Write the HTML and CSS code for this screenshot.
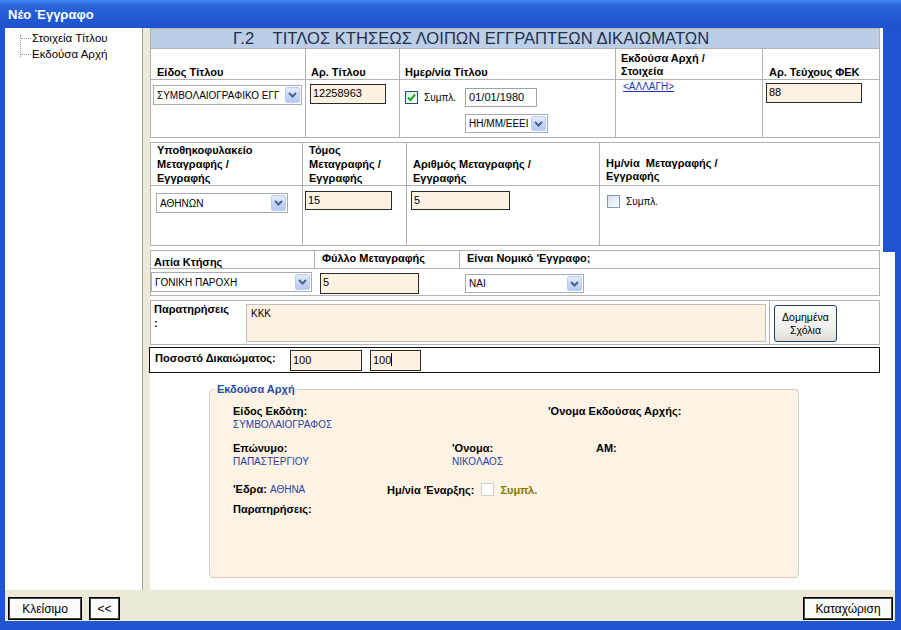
FILE: index.html
```html
<!DOCTYPE html>
<html>
<head>
<meta charset="utf-8">
<title>Νέο Έγγραφο</title>
<link rel="stylesheet" href="styles.css">
</head>
<body>
<div class="window">
  <div class="titlebar">Νέο Έγγραφο</div>
  <div class="client">
    <div class="tree">
      <div class="tree-group">
        <div class="tree-item">Στοιχεία Τίτλου</div>
        <div class="tree-item">Εκδούσα Αρχή</div>
      </div>
    </div>
    <div class="splitter"></div>
    <div class="main">
      <div class="content">

        <div class="sec s1">
          <div class="band">Γ.2&nbsp;&nbsp;&nbsp;&nbsp;ΤΙΤΛΟΣ ΚΤΗΣΕΩΣ ΛΟΙΠΩΝ ΕΓΓΡΑΠΤΕΩΝ ΔΙΚΑΙΩΜΑΤΩΝ</div>
          <div class="hd p6">Είδος Τίτλου</div>
          <div class="hd p4">Αρ. Τίτλου</div>
          <div class="hd p5">Ημερ/νία Τίτλου</div>
          <div class="hd p5 top">Εκδούσα Αρχή /<br>Στοιχεία</div>
          <div class="hd p6">Αρ. Τεύχους ΦΕΚ</div>

          <div class="cell s1c1">
            <div class="sel w149"><span class="sel-text">ΣΥΜΒΟΛΑΙΟΓΡΑΦΙΚΟ ΕΓΓ</span><span class="sel-btn"><svg width="9" height="6" viewBox="0 0 9 6"><path d="M1 1 L4.5 4.5 L8 1" fill="none" stroke="#4d6185" stroke-width="2"/></svg></span></div>
          </div>
          <div class="cell s1c2"><div class="inp w76">12258963</div></div>
          <div class="cell s1c3">
            <div class="chk-line">
              <span class="cb checked"><svg width="11" height="11" viewBox="0 0 11 11"><path d="M2 5.5 L4.5 8 L9 2.5" fill="none" stroke="#21a121" stroke-width="2"/></svg></span>
              <span class="chk-label">Συμπλ.</span>
            </div>
            <div class="date-stack">
              <div class="datebox">01/01/1980</div>
              <div class="sel w83 small"><span class="sel-text">ΗΗ/ΜΜ/ΕΕΕΙ</span><span class="sel-btn"><svg width="9" height="6" viewBox="0 0 9 6"><path d="M1 1 L4.5 4.5 L8 1" fill="none" stroke="#4d6185" stroke-width="2"/></svg></span></div>
            </div>
          </div>
          <div class="cell s1c4"><span class="link">&lt;ΑΛΛΑΓΗ&gt;</span></div>
          <div class="cell s1c5"><div class="inp w96">88</div></div>
        </div>

        <div class="sec s2">
          <div class="hd p6">Υποθηκοφυλακείο<br>Μεταγραφής /<br>Εγγραφής</div>
          <div class="hd p6">Τόμος<br>Μεταγραφής /<br>Εγγραφής</div>
          <div class="hd p6">Αριθμός Μεταγραφής /<br>Εγγραφής</div>
          <div class="hd p6 up">Ημ/νία&nbsp; Μεταγραφής /<br>Εγγραφής</div>

          <div class="cell s2c1">
            <div class="sel w132"><span class="sel-text">ΑΘΗΝΩΝ</span><span class="sel-btn"><svg width="9" height="6" viewBox="0 0 9 6"><path d="M1 1 L4.5 4.5 L8 1" fill="none" stroke="#4d6185" stroke-width="2"/></svg></span></div>
          </div>
          <div class="cell s2c2"><div class="inp w87 h19">15</div></div>
          <div class="cell s2c3"><div class="inp w99 h19">5</div></div>
          <div class="cell s2c4">
            <div class="chk-line">
              <span class="cb"></span>
              <span class="chk-label">Συμπλ.</span>
            </div>
          </div>
        </div>

        <div class="sec s3">
          <div class="hd3 first">Αιτία Κτήσης</div>
          <div class="hd3">Φύλλο Μεταγραφής</div>
          <div class="hd3">Είναι Νομικό 'Εγγραφο;</div>

          <div class="cell s3c1 noline">
            <div class="sel w161"><span class="sel-text">ΓΟΝΙΚΗ ΠΑΡΟΧΗ</span><span class="sel-btn"><svg width="9" height="6" viewBox="0 0 9 6"><path d="M1 1 L4.5 4.5 L8 1" fill="none" stroke="#4d6185" stroke-width="2"/></svg></span></div>
          </div>
          <div class="cell s3c2 noline"><div class="inp w99 h21">5</div></div>
          <div class="cell s3c3">
            <div class="sel w119 small"><span class="sel-text">ΝΑΙ</span><span class="sel-btn"><svg width="9" height="6" viewBox="0 0 9 6"><path d="M1 1 L4.5 4.5 L8 1" fill="none" stroke="#4d6185" stroke-width="2"/></svg></span></div>
          </div>
        </div>

        <div class="s4">
          <div class="s4-label">Παρατηρήσεις<br>:</div>
          <div class="s4-area"><div class="textarea">KKK</div></div>
          <div class="s4-btn"><button class="xpbtn">Δομημένα<br>Σχόλια</button></div>
        </div>

        <div class="s5">
          <span class="s5-label">Ποσοστό Δικαιώματος:</span>
          <div class="inp w72">100</div>
          <div class="inp w50">100<span class="caret"></span></div>
        </div>

        <fieldset class="issuer">
          <legend>Εκδούσα Αρχή</legend>
          <div class="irow r1">
            <div class="icol w315"><div class="lbl">Είδος Εκδότη:</div><div class="val">ΣΥΜΒΟΛΑΙΟΓΡΑΦΟΣ</div></div>
            <div class="icol"><div class="lbl">'Ονομα Εκδούσας Αρχής:</div></div>
          </div>
          <div class="irow r2">
            <div class="icol w219"><div class="lbl">Επώνυμο:</div><div class="val">ΠΑΠΑΣΤΕΡΓΙΟΥ</div></div>
            <div class="icol w144"><div class="lbl">'Ονομα:</div><div class="val">ΝΙΚΟΛΑΟΣ</div></div>
            <div class="icol"><div class="lbl">ΑΜ:</div></div>
          </div>
          <div class="irow r3">
            <div class="icol w154"><span class="lbl">'Εδρα:</span> <span class="val">ΑΘΗΝΑ</span></div>
            <div class="icol inline"><span class="lbl">Ημ/νία 'Εναρξης:</span><span class="cb plain"></span><span class="olive">Συμπλ.</span></div>
          </div>
          <div class="irow r4">
            <div class="icol"><div class="lbl">Παρατηρήσεις:</div></div>
          </div>
        </fieldset>

      </div>
      <div class="rstrip"><div class="rstrip-top"></div></div>
    </div>
  </div>
  <div class="bottombar">
    <button class="btn w74">Κλείσιμο</button>
    <button class="btn w31">&lt;&lt;</button>
    <button class="btn w90 push">Καταχώριση</button>
  </div>
</div>
</body>
</html>
```

FILE: styles.css
```css
html, body {
  margin: 0;
  padding: 0;
}
body {
  width: 901px;
  height: 630px;
  overflow: hidden;
  font-family: "Liberation Sans", Arial, sans-serif;
  background: #1f55d0;
}
.window {
  display: flex;
  flex-direction: column;
  width: 901px;
  height: 630px;
  box-sizing: border-box;
  padding-bottom: 9px;
  background: #1f55d0;
}
.titlebar {
  flex: none;
  height: 28px;
  line-height: 29px;
  padding-left: 8px;
  color: #fff;
  font-weight: bold;
  font-size: 13px;
  background: linear-gradient(180deg, #3f86f4 0%, #2a66dc 18%, #235ad4 60%, #1d52cb 100%);
}
.client {
  flex: 1;
  min-height: 0;
  display: flex;
  padding: 0 6px 0 5px;
}
.tree {
  flex: none;
  width: 138px;
  background: #fff;
  border-right: 1px solid #a3a3a3;
  padding-top: 3px;
  box-sizing: border-box;
}
.tree-group {
  margin-left: 15px;
  border-left: 1px dotted #9a9a9a;
  height: 22px;
  margin-top: 4px;
  position: relative;
}
.tree-item {
  font-size: 11.5px;
  color: #000;
  line-height: 16px;
  padding-left: 11px;
  position: relative;
  top: -5px;
}
.tree-item::before {
  content: "";
  position: absolute;
  left: 0;
  top: 8px;
  width: 10px;
  border-top: 1px dotted #9a9a9a;
}
.splitter {
  flex: none;
  width: 7px;
  background: #ece9d8;
}
.main {
  flex: 1;
  display: flex;
  background: #fff;
}
.content {
  flex: none;
  width: 730px;
}
.rstrip {
  flex: none;
  width: 12px;
  margin-left: 3px;
}
.rstrip-top {
  height: 224px;
  background: #1f55d0;
}

/* sections */
.sec {
  display: grid;
  width: 730px;
  box-sizing: border-box;
  border-top: 1px solid #b2b2b2;
  border-left: 1px solid #b2b2b2;
}
.sec > div {
  border-right: 1px solid #b2b2b2;
  border-bottom: 1px solid #b2b2b2;
  box-sizing: border-box;
  min-width: 0;
}
.s1 {
  grid-template-columns: 155px 94px 216px 147px 117px;
  grid-template-rows: 20px 31px 58px;
}
.s2 {
  margin-top: 4px;
  grid-template-columns: 152px 104px 193px 280px;
  grid-template-rows: 43px 60px;
}
.s3 {
  margin-top: 4px;
  grid-template-columns: 164px 145px 420px;
  grid-template-rows: 18px 27px;
}
.band {
  grid-column: 1 / -1;
  background: #bccde6;
  color: #22304c;
  font-size: 16.6px;
  line-height: 20px;
  padding-left: 82px;
  white-space: nowrap;
}
.hd {
  display: flex;
  align-items: flex-end;
  font-weight: bold;
  font-size: 11px;
  line-height: 14px;
  padding-bottom: 0;
  color: #000;
}
.hd.top {
  line-height: 13px;
  padding-bottom: 1px;
}
.hd.up {
  line-height: 13px;
  padding-bottom: 2px;
}
.p4 { padding-left: 5px; }
.p5 { padding-left: 5px; }
.p6 { padding-left: 6px; }
.hd3 {
  font-weight: bold;
  font-size: 11px;
  line-height: 13px;
  padding-left: 7px;
  padding-top: 1px;
}
.hd3.first {
  padding-left: 3px;
  padding-top: 5px;
}
.sec > .noline {
  border-right: none;
}

.cell {
  font-size: 10px;
}
.s1c1 { padding: 5px 0 0 2px; }
.s1c2 { padding: 4px 0 0 4px; }
.s1c3 {
  padding: 8px 0 0 5px;
  display: flex;
}
.s1c4 { padding: 0 0 0 7px; }
.s1c5 { padding: 3px 0 0 3px; }
.s2c1 { padding: 7px 0 0 5px; }
.s2c2 { padding: 5px 0 0 2px; }
.s2c3 { padding: 5px 0 0 4px; }
.s2c4 { padding: 9px 0 0 7px; }
.s3c1 { padding: 3px 0 0 0; }
.s3c2 { padding: 4px 0 0 5px; }
.s3c3 { padding: 5px 0 0 5px; }

/* combobox */
.sel {
  display: flex;
  align-items: center;
  height: 20px;
  box-sizing: border-box;
  border: 1px solid #a5acb5;
  background: #fff;
  padding: 1px;
}
.sel.small {
  height: 19px;
}
.sel-text {
  flex: 1;
  font-size: 10px;
  padding-left: 2px;
  white-space: nowrap;
  overflow: hidden;
  color: #000;
}
.sel-btn {
  flex: none;
  width: 15px;
  height: 100%;
  box-sizing: border-box;
  border: 1px solid #bccdf3;
  border-radius: 2px;
  background: linear-gradient(180deg, #e3ebfd 0%, #c6d5f8 60%, #b6c9f4 100%);
  display: flex;
  align-items: center;
  justify-content: center;
}
.w149 { width: 149px; }
.w132 { width: 132px; }
.w161 { width: 161px; }
.w119 { width: 119px; }
.w83 { width: 83px; }

/* text inputs */
.inp {
  height: 20px;
  box-sizing: border-box;
  border: 1px solid #2a2a2a;
  background: #fdf1e1;
  font-size: 11px;
  line-height: 14px;
  padding: 1px 2px;
  color: #000;
  white-space: nowrap;
}
.h19 { height: 19px; }
.h21 { height: 21px; }
.w76 { width: 76px; }
.w96 { width: 96px; }
.w87 { width: 87px; }
.w99 { width: 99px; }
.w72 { width: 72px; }
.w50 { width: 51px; }
.caret {
  display: inline-block;
  width: 1px;
  height: 13px;
  background: #000;
  vertical-align: -2px;
}

.chk-line {
  display: flex;
  align-items: center;
  height: 19px;
}
.s2c4 .chk-line {
  height: 13px;
}
.cb {
  flex: none;
  width: 13px;
  height: 13px;
  box-sizing: border-box;
  border: 1px solid #1c5180;
  background: linear-gradient(135deg, #dcdcd7 0%, #f2f2ef 60%, #fff 100%);
  display: inline-flex;
  align-items: center;
  justify-content: center;
}
.cb.checked {
  background: linear-gradient(135deg, #d6ecd2 0%, #eef7ec 60%, #fff 100%);
}
.s2c4 .cb {
  border-color: #7c99b8;
  background: linear-gradient(135deg, #d8dfea 0%, #eef1f6 60%, #fff 100%);
}
.chk-label {
  font-size: 10px;
  margin-left: 6px;
  color: #000;
}
.date-stack {
  margin-left: 9px;
  display: flex;
  flex-direction: column;
  gap: 7px;
}
.datebox {
  width: 72px;
  height: 19px;
  box-sizing: border-box;
  border: 1px solid #9aa4ad;
  background: #fff;
  font-size: 11px;
  line-height: 17px;
  padding-left: 3px;
  color: #000;
}
.link {
  font-size: 10px;
  color: #1a37b8;
  text-decoration: underline;
  line-height: 14px;
}

/* remarks */
.s4 {
  margin-top: 4px;
  width: 730px;
  height: 45px;
  box-sizing: border-box;
  border: 1px solid #b2b2b2;
  display: flex;
}
.s4-label {
  flex: none;
  width: 95px;
  font-weight: bold;
  font-size: 11px;
  line-height: 14px;
  padding: 1px 0 0 3px;
  box-sizing: border-box;
}
.s4-area {
  flex: none;
  width: 523px;
  padding-top: 3px;
}
.textarea {
  width: 520px;
  height: 38px;
  box-sizing: border-box;
  border: 1px solid #c0bfba;
  background: #fdf1e1;
  font-size: 10px;
  padding: 3px 4px;
}
.s4-btn {
  flex: 1;
  border-left: 1px solid #b2b2b2;
  padding: 4px 0 0 4px;
}
.xpbtn {
  width: 63px;
  height: 37px;
  box-sizing: border-box;
  border: 1px solid #1f3d68;
  border-radius: 3px;
  background: linear-gradient(180deg, #fbfbf9 0%, #eeeeea 70%, #dedbd2 100%);
  font-family: "Liberation Sans", Arial, sans-serif;
  font-size: 10.5px;
  line-height: 13px;
  color: #000;
  padding: 0;
}

/* percent */
.s5 {
  margin-top: 2px;
  width: 731px;
  margin-left: -1px;
  height: 26px;
  box-sizing: border-box;
  border: 1px solid #111;
  display: flex;
  align-items: center;
  padding-left: 5px;
  gap: 8px;
}
.s5 .inp {
  height: 21px;
  margin-top: 1px;
  line-height: 17px;
}
.s5-label {
  font-weight: bold;
  font-size: 11px;
  width: 127px;
  margin-top: -4px;
}

/* issuer fieldset */
.issuer {
  margin: 10px 0 0 59px;
  width: 590px;
  height: 195px;
  box-sizing: border-box;
  border: 1px solid #d2cfc2;
  border-radius: 4px;
  background: #fcf3e4;
  padding: 0 0 0 23px;
}
.issuer legend {
  font-weight: bold;
  font-size: 11px;
  color: #1f4ea6;
  padding: 0 2px;
  margin-left: -18px;
}
.irow {
  display: flex;
}
.r1 { margin-top: 9px; }
.r2 { margin-top: 9px; }
.r3 { margin-top: 13px; }
.r4 { margin-top: 5px; }
.icol {
  flex: none;
  font-size: 11px;
  line-height: 14px;
}
.icol.inline {
  display: flex;
  align-items: center;
}
.w315 { width: 315px; }
.w219 { width: 219px; }
.w144 { width: 144px; }
.w154 { width: 154px; }
.lbl {
  font-weight: bold;
  color: #000;
}
.val {
  font-size: 10px;
  color: #2a3ea8;
}
.cb.plain {
  border: 1px solid #cfcfcf;
  background: #fff;
  margin: 0 6px 0 7px;
}
.olive {
  font-weight: bold;
  color: #8a7200;
}

/* bottom */
.bottombar {
  flex: none;
  height: 31px;
  margin: 0 6px 0 5px;
  box-sizing: border-box;
  background: #ece9d8;
  display: flex;
  align-items: flex-start;
  padding: 7px 2px 0 3px;
  gap: 7px;
}
.btn {
  height: 23px;
  box-sizing: border-box;
  border: 1px solid #000;
  box-shadow: inset 0 0 0 1px #444;
  background: #fbfbfa;
  font-family: "Liberation Sans", Arial, sans-serif;
  font-size: 12px;
  color: #000;
  padding: 0;
}
.w74 { width: 74px; }
.w31 { width: 31px; }
.w90 { width: 90px; }
.push { margin-left: auto; }
```
